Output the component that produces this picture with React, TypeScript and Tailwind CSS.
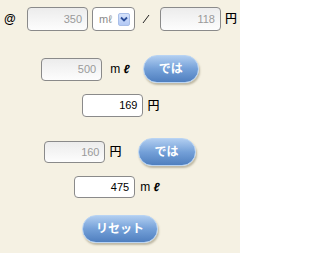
import React from "react";

const font = { fontFamily: '"Liberation Sans", "Noto Sans CJK JP", sans-serif' };

const NumBox = ({ value, off, className }: { value: string; off?: boolean; className?: string }) => (
  <div
    className={`flex items-center justify-end pr-[5px] w-[61px] rounded-[4px] border border-[#8a8a8a] text-[11px] ${
      off ? "text-[#9a9a9a] bg-gradient-to-b from-[#ececec] to-[#fdfdfd]" : "text-black bg-white"
    } ${className ?? ""}`}
  >
    {value}
  </div>
);

const BlueButton = ({ label, className }: { label: string; className?: string }) => (
  <button
    className={`h-[28px] rounded-full border border-[#b9d4f3] bg-gradient-to-b from-[#b0cdf0] via-[#74a0d8] to-[#4f7fbf] text-white text-[12px] font-bold shadow-[1px_2px_2px_rgba(90,80,50,0.35)] ${className ?? ""}`}
    style={font}
  >
    {label}
  </button>
);

const Ml = ({ className }: { className?: string }) => (
  <span className={`text-[12px] text-black ${className ?? ""}`}>
    m <span className="font-bold italic">ℓ</span>
  </span>
);

const Yen = ({ className }: { className?: string }) => (
  <span className={`text-[12px] font-medium text-black ${className ?? ""}`}>円</span>
);

export default function App() {
  return (
    <div className="w-[240px] h-[253px] bg-[#f5f1e3] flex flex-col items-center pt-[7px]" style={font}>
      <div className="flex items-center w-full pl-[4px] h-[24px]">
        <span className="text-[12px] text-black font-bold w-[9px]">@</span>
        <NumBox value="350" off className="ml-[14px] h-[24px] w-[60px]" />
        <div className="ml-[4px] w-[43px] h-[24px] rounded-[4px] border border-[#8a8a8a] bg-white flex items-center pl-[6px]">
          <span className="text-[11px] text-[#8a8a8a] w-[19px]">mℓ</span>
          <span className="w-[12px] h-[13px] rounded-[2px] bg-gradient-to-b from-[#d6e3fb] to-[#b3c9f5] border border-[#a9bfe9] flex items-center justify-center">
            <svg width="8" height="6" viewBox="0 0 8 6">
              <path d="M1 1.5 L4 4.5 L7 1.5" stroke="#2d4f9a" strokeWidth="1.8" fill="none" />
            </svg>
          </span>
        </div>
        <svg width="8" height="10" viewBox="0 0 8 10" className="ml-[7px]">
          <path d="M7 1 L1 9" stroke="#222" strokeWidth="1" />
        </svg>
        <NumBox value="118" off className="ml-[10px] h-[24px] w-[60px]" />
        <Yen className="ml-[4px]" />
      </div>

      <div className="flex items-center mt-[24px] h-[28px]">
        <NumBox value="500" off className="h-[23px] w-[60px]" />
        <Ml className="ml-[8px]" />
        <BlueButton label="では" className="ml-[13px] w-[56px]" />
      </div>

      <div className="flex items-center mt-[11px] h-[23px] pl-[2px]">
        <NumBox value="169" className="h-[23px] w-[61px]" />
        <Yen className="ml-[4px]" />
      </div>

      <div className="flex items-center mt-[21px] h-[28px]">
        <NumBox value="160" off className="h-[22px] w-[61px]" />
        <Yen className="ml-[4px]" />
        <BlueButton label="では" className="ml-[16px] w-[58px]" />
      </div>

      <div className="flex items-center mt-[10px] h-[22px] pr-[6px]">
        <NumBox value="475" className="h-[22px] w-[61px]" />
        <Ml className="ml-[5px]" />
      </div>

      <div className="mt-[17px]">
        <BlueButton label="リセット" className="w-[76px]" />
      </div>
    </div>
  );
}
